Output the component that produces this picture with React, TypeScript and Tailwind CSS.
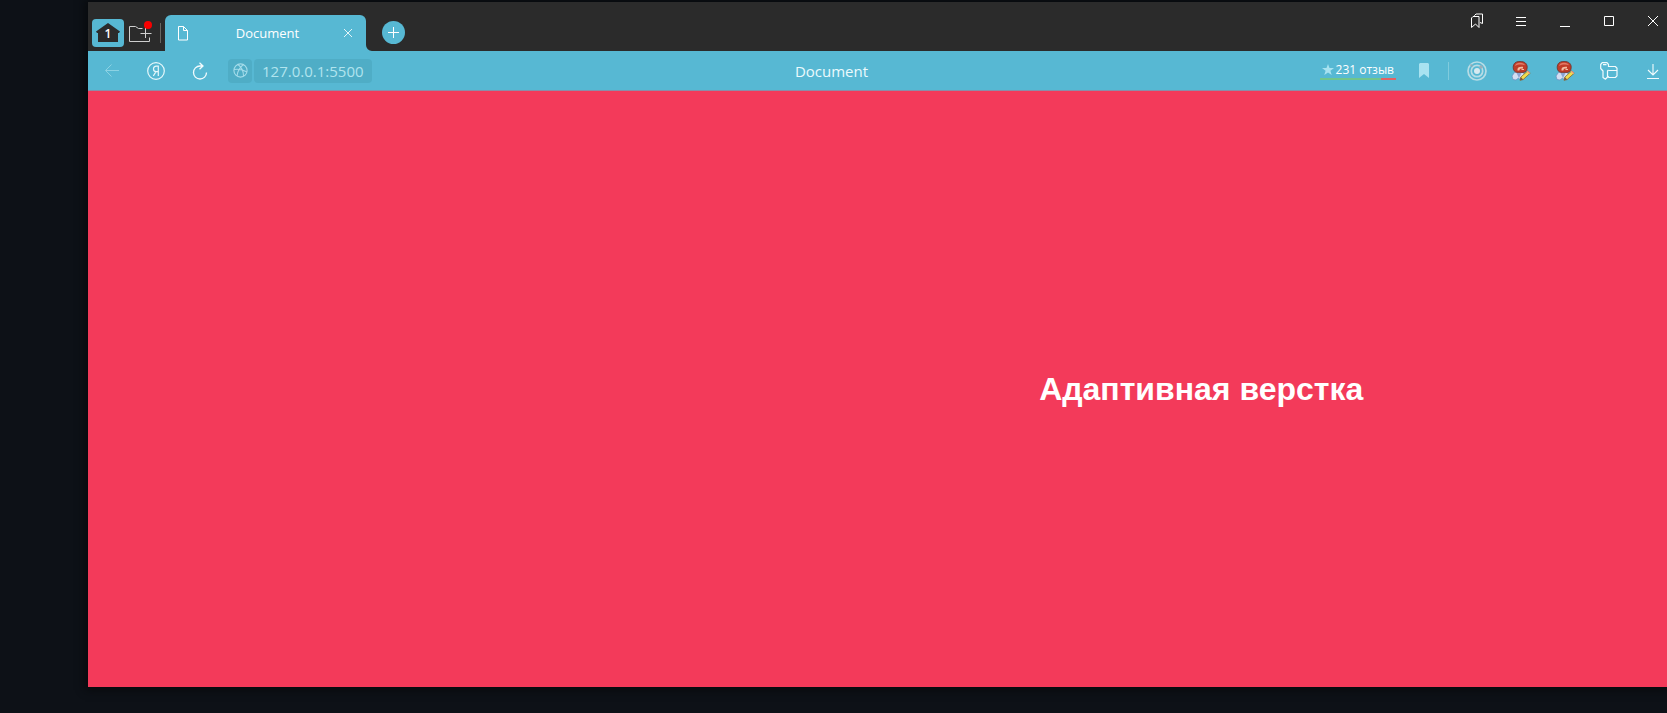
import type { ReactNode } from 'react';

function IconButton({ label, children }: { label: string; children: ReactNode }) {
  return (
    <button type="button" aria-label={label} className="flex h-7 w-7 shrink-0 items-center justify-center">
      {children}
    </button>
  );
}

function ProfileIcon() {
  return (
    <svg width="20" height="20" viewBox="0 0 20 20" fill="none">
      <path d="M1 15l2.500-3.500 4-1 4 .5 3 3.500-1.500 4-3.500.5-2-2-2.500 2-3-.5z" fill="#d3def2" stroke="#6d8cc0" strokeWidth=".7" />
      <path d="M5.500 12l2.500 5 2.500-5z" fill="#8ba3d2" />
      <path d="M2.200 6.500C2.200 2.500 4.600.4 9 .4c4.600 0 7.200 2.200 7.200 5.800 0 2.800-1.200 4.800-3.700 5.200H6c-2.500-.4-3.800-2.200-3.800-4.900z" fill="#c03c28" stroke="#6d2f28" strokeWidth=".8" />
      <path d="M4 5c.5-2.200 2.300-3.300 5-3.300s4.500 1 5 2.600C11 3.200 7 3.400 4 5z" fill="#e27a66" />
      <path d="M6.500 8c.5-2 2.500-2.700 5.500-2.200v1.700l-3 .2-.7 1.800H6.500z" fill="#f2bda2" />
      <path d="M10.500 8.500h2.500" stroke="#f2bda2" />
      <path d="M9 19.300l.8-3.200 7-6.300 2.400 2.400-7 6.300z" fill="#f3dc4e" stroke="#7d6d34" strokeWidth=".8" />
      <path d="M9 19.300l.8-3.200 2.400 2.400z" fill="#7d543b" />
      <path d="M15.800 10.700l1-1 2.400 2.400-1 1z" fill="#ef9e88" />
    </svg>
  );
}

function TabStrip() {
  return (
    <header className="flex h-[49px] items-end bg-[#2b2b2b] pl-1">
      <button type="button" aria-label="Главная" className="mb-1 flex h-7 w-8 shrink-0 items-center justify-center rounded bg-[#57b8d3]">
        <svg width="24" height="20" viewBox="0 0 24 20">
          <path d="M12 0l12 8.500-1 1.500H22v9H2v-9H1L0 8.500z" fill="#2b2b2b" />
          <text x="12" y="15" textAnchor="middle" fill="#fff" fontSize="12" fontWeight="600" fontFamily="Open Sans, sans-serif">1</text>
        </svg>
      </button>
      <button type="button" aria-label="Новая группа" className="mb-1 ml-1 flex h-7 w-7 shrink-0 items-center justify-start">
        <svg width="26" height="24" viewBox="0 0 26 24" fill="none" stroke="#cfcfcf">
          <path d="M14.500 7.500h-4l-3-2h-6v15h20v-4M12.500 12.500h11M17.500 7v10" />
          <circle cx="20" cy="4" r="4" fill="#f90000" stroke="none" />
        </svg>
      </button>
      <span className="mb-2 ml-1 h-5 w-px bg-[#686662]" />
      <div className="relative ml-1 flex h-9 w-[201px] shrink-0 items-center rounded-t-md bg-[#57b8d3] pr-2 pl-3">
        <svg width="12" height="15" viewBox="0 0 12 15" fill="none" stroke="#fff" className="shrink-0">
          <path d="M1.500.5h5l4 4v9.500h-9zM6.500.5v4h4" />
        </svg>
        <span className="flex-1 pl-2 text-center text-[13px] leading-5 text-white">Document</span>
        <button type="button" aria-label="Закрыть вкладку" className="flex h-5 w-5 items-center justify-center">
          <svg width="10" height="10" viewBox="0 0 10 10" stroke="#e2f4f8"><path d="M1 1l8 8M9 1L1 9" /></svg>
        </button>
        <svg width="6" height="6" viewBox="0 0 6 6" className="absolute bottom-0 left-full">
          <path d="M0 0a6 6 0 0 0 6 6H0z" fill="#57b8d3" />
        </svg>
      </div>
      <button type="button" aria-label="Новая вкладка" className="mb-[7px] ml-4 flex h-[23px] w-[23px] shrink-0 items-center justify-center rounded-full bg-[#57b8d3]">
        <svg width="11" height="11" viewBox="0 0 11 11" stroke="#fff"><path d="M0 5.500h11M5.500 0v11" /></svg>
      </button>
      <div className="mb-4 ml-auto flex gap-4">
        <IconButton label="Коллекции">
          <svg width="14" height="16" viewBox="0 0 14 16" fill="none" stroke="#fff" strokeLinejoin="round">
            <path d="M4.500 3.500V2.500L6 1h6.500v9.500L10 9.500M1.500 5L3 3.500h6v11l-3.500-3.500-4 3.500z" />
          </svg>
        </IconButton>
        <IconButton label="Меню">
          <svg width="10" height="11" viewBox="0 0 10 11" stroke="#fff"><path d="M0 1.500h10M0 5.500h10M0 9.500h10" /></svg>
        </IconButton>
        <IconButton label="Свернуть">
          <svg width="10" height="11" viewBox="0 0 10 11" stroke="#fff"><path d="M0 10.500h10" /></svg>
        </IconButton>
        <IconButton label="Развернуть">
          <svg width="10" height="10" viewBox="0 0 10 10" fill="none" stroke="#fff"><path d="M.5.5h9v9h-9z" /></svg>
        </IconButton>
        <IconButton label="Закрыть">
          <svg width="10" height="10" viewBox="0 0 10 10" stroke="#fff"><path d="M0 0l10 10M10 0L0 10" /></svg>
        </IconButton>
      </div>
    </header>
  );
}

function Toolbar() {
  return (
    <nav className="flex h-10 items-center border-b border-[#8b8da7] bg-[#57b8d3]">
      <div className="flex gap-4 pl-[10px]">
        <IconButton label="Назад">
          <svg width="14" height="13" viewBox="0 0 14 13" fill="none" stroke="#8cd2e3"><path d="M14 6.500H.8M6.500.5l-6 6 6 6" /></svg>
        </IconButton>
        <IconButton label="Яндекс">
          <svg width="18" height="18" viewBox="0 0 18 18" fill="none" stroke="#e7f8fb" strokeWidth="1.200">
            <circle cx="9" cy="9" r="8.300" />
            <path d="M11.300 14V4.200H9.400C7.400 4.200 6.500 5.400 6.500 7s1 2.600 2.800 2.600h2M9 9.600L6.300 14" />
          </svg>
        </IconButton>
        <IconButton label="Обновить">
          <svg width="16" height="18" viewBox="0 0 16 18" fill="none" stroke="#f2fbfd" strokeWidth="1.300">
            <path d="M11 4H8a6.500 6.500 0 1 0 6.500 6.500M7.500.7L11 4 7.500 7.300" />
          </svg>
        </IconButton>
      </div>
      <button type="button" aria-label="Сведения о сайте" className="ml-[14px] flex h-6 w-6 shrink-0 items-center justify-center rounded bg-[#4fadc6]">
        <svg width="15" height="15" viewBox="0 0 15 15" fill="none" stroke="#a4dcea" strokeWidth="1.100">
          <circle cx="7.500" cy="7.500" r="6.600" />
          <path d="M5 1.500c4 3 5.500 6.500 5.500 11.500M10.500 1.500c-4 3-6 7-6.500 11.500M1 6.500c4-.5 9 0 13 2.500" />
        </svg>
      </button>
      <button type="button" className="ml-[2px] h-6 shrink-0 rounded bg-[#4fadc6] px-2 text-[15px] leading-6 text-[#b1e4ee]">127.0.0.1:5500</button>
      <h2 className="flex-1 pr-7 text-center text-[15px] leading-6 text-[#ebfafd]">Document</h2>
      <a href="#reviews" className="flex flex-col">
        <span className="flex items-center gap-[2px] px-[2px] text-[12px] leading-[17px] font-medium whitespace-nowrap text-white">
          <svg width="12" height="11" viewBox="0 0 12 11" fill="#a8e2f0"><path d="M6 0l1.500 4H12L8.400 6.700 9.700 11 6 8.400 2.300 11l1.300-4.300L0 4h4.500z" /></svg>
          231 отзыв
        </span>
        <span className="flex h-[2px]">
          <span className="flex-4 bg-[#71c58c]" />
          <span className="flex-1 bg-[#e36264]" />
        </span>
      </a>
      <button type="button" aria-label="В закладки" className="ml-[23px]">
        <svg width="10" height="15" viewBox="0 0 10 15" fill="#a8e2f0"><path d="M0 1l1-1h8l1 1v14l-5-4-5 4z" /></svg>
      </button>
      <span className="ml-[19px] h-[18px] w-px bg-[#80cbdd]" />
      <div className="ml-[14px] flex gap-4">
        <IconButton label="Радар">
          <svg width="20" height="20" viewBox="0 0 20 20" fill="none" stroke="#b7dce5" strokeWidth="1.700">
            <circle cx="10" cy="10" r="9" />
            <circle cx="10" cy="10" r="5.700" />
            <circle cx="10" cy="10" r="3" fill="#d7eaf0" stroke="none" />
            <circle cx="14" cy="6" r="1.800" fill="#9daeb8" stroke="none" />
            <path d="M3.500 3.500l2 2" stroke="#8ca9b5" />
          </svg>
        </IconButton>
        <IconButton label="Расширение 1"><ProfileIcon /></IconButton>
        <IconButton label="Расширение 2"><ProfileIcon /></IconButton>
        <IconButton label="Пароли и карты">
          <svg width="18" height="18" viewBox="0 0 18 18" fill="none" stroke="#f2fbfd" strokeWidth="1.200" strokeLinejoin="round">
            <path d="M8.500 5V2.500L7 .7H2.200L.7 2.500v4l2.300 2.500v6.500l2.500 1.700L7.500 15V9l1-1M3 2.700h3.500" />
            <path d="M8.500 4.500h6.800l1.700 1.700v7.600l-1.700 1.700H9L7.500 14M8.500 8.500H17" />
          </svg>
        </IconButton>
        <IconButton label="Загрузки">
          <svg width="12" height="16" viewBox="0 0 12 16" fill="none" stroke="#f2fbfd"><path d="M6 1v11M1 7l5 5 5-5M0 15.500h12" strokeWidth="1.100" /></svg>
        </IconButton>
      </div>
    </nav>
  );
}

export default function App() {
  return (
    <div className="flex min-h-screen flex-col overflow-hidden bg-[#0d1117] pt-[2px] pb-[26px] pl-[88px] font-['Open_Sans','Noto_Sans',sans-serif]">
      <div className="flex flex-1 flex-col shadow-[0_0_8px_3px_#080a0d]">
        <TabStrip />
        <Toolbar />
        <main className="flex flex-1 items-center justify-center bg-[#f33a5a] pl-[41%]">
          <h1 className="font-['Liberation_Sans',Arial,sans-serif] text-[32px] leading-9 font-bold text-white">Адаптивная верстка</h1>
        </main>
      </div>
    </div>
  );
}
